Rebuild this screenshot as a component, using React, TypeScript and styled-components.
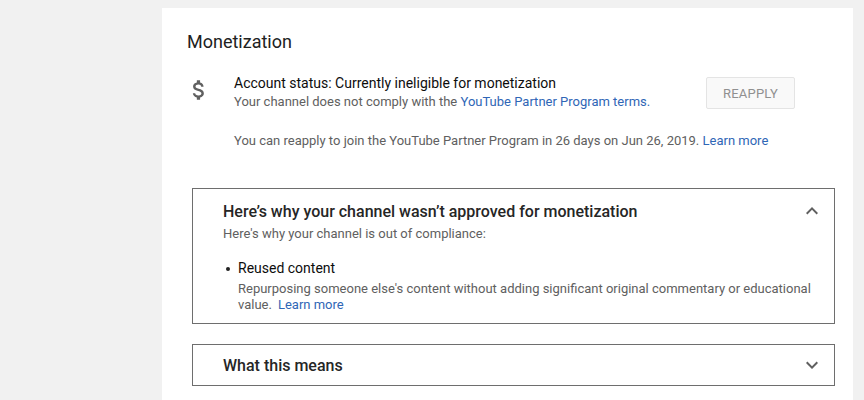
import React from "react";
import styled, { createGlobalStyle } from "styled-components";

const GlobalStyle = createGlobalStyle`
  html, body {
    margin: 0;
    padding: 0;
    background: #f1f1f1;
    font-family: Roboto, "Noto Sans", Arial, sans-serif;
  }
`;

const Page = styled.div`
  display: flex;
  padding: 8px 11px 0 162px;
  height: 392px;
  overflow: hidden;
`;

const Card = styled.section`
  flex: 1;
  background: #fff;
  padding: 22px 18px 0 25px;
`;

const Title = styled.h2`
  margin: 0;
  font-size: 18px;
  font-weight: 400;
  line-height: 24px;
  color: #212121;
`;

const StatusRow = styled.div`
  display: flex;
  align-items: flex-start;
  margin-top: 19px;
`;

const IconCell = styled.div`
  width: 47px;
  padding-top: 4px;
  color: #606060;
  display: flex;
  & > svg {
    margin-left: -1px;
  }
`;

const StatusText = styled.div`
  flex: 1;
`;

const StatusHeading = styled.div`
  font-size: 14px;
  line-height: 20px;
  color: #0d0d0d;
`;

const Muted = styled.div<{ $top?: number; $indent?: number }>`
  font-size: 13px;
  line-height: 18px;
  color: #606060;
  margin-top: ${(p) => p.$top ?? 0}px;
  margin-left: ${(p) => p.$indent ?? 0}px;
`;

const Link = styled.a<{ $gap?: number }>`
  color: #2f66b6;
  text-decoration: none;
  margin-left: ${(p) => p.$gap ?? 0}px;
`;

const ReapplyButton = styled.button`
  margin: 4px 40px 0 0;
  width: 89px;
  height: 32px;
  border: 1px solid #e4e4e4;
  border-radius: 2px;
  background: #f9f9f9;
  color: #909090;
  font: 400 13px Roboto, Arial, sans-serif;
  letter-spacing: 0.2px;
`;

const Panel = styled.div<{ $top: number }>`
  margin: ${(p) => p.$top}px 0 0 5px;
  border: 1px solid #6e6e6e;
  padding: 0 0 0 30px;
`;

const PanelHeader = styled.div<{ $height: number }>`
  display: flex;
  align-items: center;
  justify-content: space-between;
  height: ${(p) => p.$height}px;
  padding-right: 10px;
  color: #606060;
`;

const PanelTitle = styled.div`
  font-size: 16px;
  font-weight: 500;
  color: #262626;
`;

const PanelBody = styled.div`
  padding: 0 20px 10px 0;
  margin-top: -8px;
`;

const Reasons = styled.ul`
  margin: 15px 0 0;
  padding: 0 0 0 15px;
  list-style: none;
`;

const Reason = styled.li`
  position: relative;
  &::before {
    content: "";
    position: absolute;
    left: -12px;
    top: 9px;
    width: 4px;
    height: 4px;
    border-radius: 50%;
    background: #212121;
  }
`;

const ReasonTitle = styled.div`
  font-size: 14px;
  line-height: 20px;
  color: #0d0d0d;
`;

const ReasonText = styled.div`
  font-size: 13px;
  line-height: 16px;
  color: #606060;
  margin-top: 3px;
`;

const DollarIcon = () => (
  <svg width="26" height="26" viewBox="0 0 24 24" fill="currentColor">
    <path d="M11.8 10.9c-2.27-.59-3-1.2-3-2.15 0-1.09 1.01-1.85 2.7-1.85 1.78 0 2.44.85 2.5 2.1h2.21c-.07-1.72-1.12-3.3-3.21-3.81V3h-3v2.16c-1.94.42-3.5 1.68-3.5 3.61 0 2.31 1.91 3.46 4.7 4.13 2.5.6 3 1.48 3 2.41 0 .69-.49 1.79-2.7 1.79-2.06 0-2.87-.92-2.98-2.1h-2.2c.12 2.19 1.76 3.42 3.68 3.83V21h3v-2.15c1.95-.37 3.5-1.5 3.5-3.55 0-2.84-2.43-3.81-4.7-4.4z" />
  </svg>
);

const Chevron = ({ up }: { up?: boolean }) => (
  <svg width="24" height="24" viewBox="0 0 24 24" fill="currentColor">
    {up ? (
      <path d="M12 8l-6 6 1.41 1.41L12 10.83l4.59 4.58L18 14z" />
    ) : (
      <path d="M16.59 8.59L12 13.17 7.41 8.59 6 10l6 6 6-6z" />
    )}
  </svg>
);

export default function App() {
  return (
    <>
      <GlobalStyle />
      <Page>
        <Card>
          <Title>Monetization</Title>
          <StatusRow>
            <IconCell>
              <DollarIcon />
            </IconCell>
            <StatusText>
              <StatusHeading>Account status: Currently ineligible for monetization</StatusHeading>
              <Muted>
                Your channel does not comply with the <Link href="#">YouTube Partner Program terms.</Link>
              </Muted>
            </StatusText>
            <ReapplyButton>REAPPLY</ReapplyButton>
          </StatusRow>
          <Muted $top={21} $indent={47}>
            You can reapply to join the YouTube Partner Program in 26 days on Jun 26, 2019.{" "}
            <Link href="#">Learn more</Link>
          </Muted>

          <Panel $top={38}>
            <PanelHeader $height={44}>
              <PanelTitle>Here’s why your channel wasn’t approved for monetization</PanelTitle>
              <Chevron up />
            </PanelHeader>
            <PanelBody>
              <Muted>Here's why your channel is out of compliance:</Muted>
              <Reasons>
                <Reason>
                  <ReasonTitle>Reused content</ReasonTitle>
                  <ReasonText>
                    Repurposing someone else's content without adding significant original commentary or
                    educational value.
                    <Link href="#" $gap={6}>
                      Learn more
                    </Link>
                  </ReasonText>
                </Reason>
              </Reasons>
            </PanelBody>
          </Panel>

          <Panel $top={20}>
            <PanelHeader $height={40}>
              <PanelTitle>What this means</PanelTitle>
              <Chevron />
            </PanelHeader>
          </Panel>
        </Card>
      </Page>
    </>
  );
}
